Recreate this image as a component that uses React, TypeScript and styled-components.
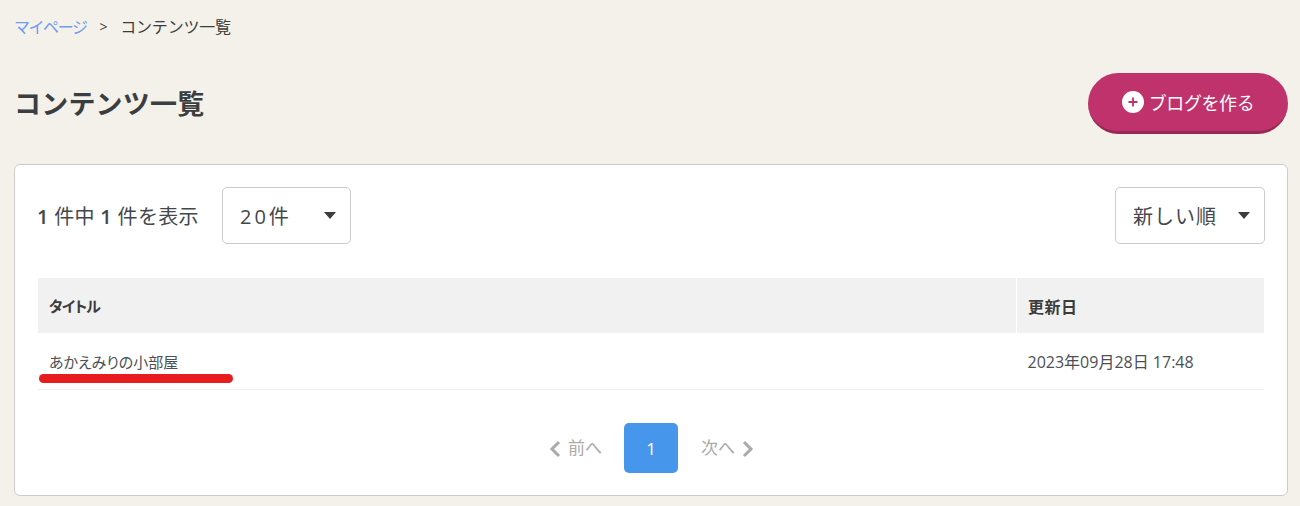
import * as React from "react";
import styled, { createGlobalStyle } from "styled-components";

const GlobalStyle = createGlobalStyle`
  html, body {
    margin: 0;
    padding: 0;
    background: #f4f1eb;
    color: #3c3c3c;
    font-family: "Open Sans", "Noto Sans CJK JP", sans-serif;
  }
`;

const Page = styled.div`
  width: 1300px;
  height: 506px;
  box-sizing: border-box;
  padding: 15px 12px 0 14px;
  overflow: hidden;
`;

const Breadcrumb = styled.nav`
  display: flex;
  align-items: center;
  height: 24px;
  font-size: 16px;
  line-height: 24px;
  letter-spacing: -0.2px;
`;

const CrumbLink = styled.a`
  color: #6c9bf0;
  letter-spacing: -1.45px;
`;

const CrumbSeparator = styled.span`
  margin: 0 13px;
  font-size: 14px;
  color: #444;
`;

const Header = styled.header`
  display: flex;
  justify-content: space-between;
  align-items: flex-start;
  margin-top: 34px;
  height: 91px;
`;

const Title = styled.h1`
  margin: 0;
  padding-top: 11px;
  font-size: 27px;
  line-height: 40px;
  font-weight: 700;
  letter-spacing: 0.2px;
  color: #3a3e40;
`;

const CreateButton = styled.button`
  display: flex;
  align-items: center;
  justify-content: center;
  gap: 5px;
  width: 200px;
  height: 61px;
  padding: 0;
  border: 0;
  border-bottom: 3px solid #9a2855;
  border-radius: 31px;
  background: #c0326b;
  color: #fff;
  font-family: inherit;
  font-size: 18px;
  letter-spacing: -0.4px;
`;

const PlusIcon = styled.svg`
  width: 22px;
  height: 22px;
  flex: none;
`;

const Card = styled.section`
  box-sizing: border-box;
  width: 1274px;
  height: 332px;
  padding: 22px 22px 0 23px;
  background: #fff;
  border: 1px solid #ccc;
  border-radius: 6px;
`;

const Toolbar = styled.div`
  display: flex;
  align-items: center;
  height: 57px;
`;

const Count = styled.div`
  width: 162px;
  margin-left: -1px;
  margin-right: 23px;
  font-size: 20px;
  letter-spacing: 0.3px;
  white-space: pre;
  color: #44484c;
`;

const Strong = styled.b`
  font-weight: 600;
`;

const Select = styled.div<{ $width: number; $push?: boolean; $spacing: number }>`
  box-sizing: border-box;
  display: flex;
  align-items: center;
  justify-content: space-between;
  width: ${(p) => p.$width}px;
  height: 57px;
  padding: 0 14px 0 17px;
  margin-left: ${(p) => (p.$push ? "auto" : "0")};
  border: 1px solid #ccc;
  border-radius: 5px;
  font-size: 20px;
  letter-spacing: ${(p) => p.$spacing}px;
  color: #44484c;
`;

const Caret = styled.span`
  width: 0;
  height: 0;
  border-left: 6px solid transparent;
  border-right: 6px solid transparent;
  border-top: 7px solid #3c3c3c;
`;

const Table = styled.table`
  width: 1226px;
  margin-top: 34px;
  border-collapse: collapse;
  table-layout: fixed;
`;

const HeadCell = styled.th<{ $width?: number }>`
  height: 55px;
  width: ${(p) => (p.$width ? `${p.$width}px` : "auto")};
  padding: 0 11px;
  background: #f1f1f1;
  text-align: left;
  font-size: 16px;
  font-weight: 700;
  font-feature-settings: "palt";
  letter-spacing: 0.5px;
  color: #3c3c3c;
  & + & {
    border-left: 1px solid #fff;
  }
`;

const TitleHead = styled(HeadCell)`
  font-size: 15px;
  letter-spacing: -0.8px;
`;

const Cell = styled.td`
  position: relative;
  height: 56px;
  padding: 0 11px;
  border-bottom: 1px solid #f1f1f1;
  font-size: 16px;
  font-feature-settings: "palt";
  color: #4c5054;
`;

const TitleCell = styled(Cell)`
  font-size: 15px;
`;

const Marker = styled.span`
  position: absolute;
  left: 1px;
  top: 41px;
  width: 194px;
  height: 9px;
  border-radius: 5px;
  background: #e81c1e;
`;

const Pager = styled.nav`
  display: flex;
  justify-content: center;
  align-items: center;
  margin-top: 33px;
  color: #aaa;
  font-size: 17px;
`;

const PagerLink = styled.span`
  display: flex;
  align-items: center;
  gap: 7px;
  line-height: 20px;
  padding-bottom: 1px;
`;

const CurrentPage = styled.span`
  display: flex;
  align-items: center;
  justify-content: center;
  width: 54px;
  height: 50px;
  margin: 0 23px 0 22px;
  border-radius: 5px;
  background: #4696ec;
  color: #fff;
  font-size: 17px;
`;

const Chevron = styled.svg`
  width: 12px;
  height: 18px;
  flex: none;
  margin-top: 3px;
`;

export default function App() {
  return (
    <>
      <GlobalStyle />
      <Page>
        <Breadcrumb>
          <CrumbLink>マイページ</CrumbLink>
          <CrumbSeparator>&gt;</CrumbSeparator>
          <span>コンテンツ一覧</span>
        </Breadcrumb>
        <Header>
          <Title>コンテンツ一覧</Title>
          <CreateButton>
            <PlusIcon viewBox="0 0 22 22">
              <circle cx="11" cy="11" r="11" fill="#fff" />
              <path d="M11 6.5v9M6.5 11h9" stroke="#c0326b" strokeWidth="1.8" />
            </PlusIcon>
            ブログを作る
          </CreateButton>
        </Header>
        <Card>
          <Toolbar>
            <Count>
              <Strong>1</Strong> 件中 <Strong>1</Strong> 件を表示
            </Count>
            <Select $width={129} $spacing={3}>
              20件
              <Caret />
            </Select>
            <Select $width={150} $push $spacing={1}>
              新しい順
              <Caret />
            </Select>
          </Toolbar>
          <Table>
            <thead>
              <tr>
                <TitleHead $width={956}>タイトル</TitleHead>
                <HeadCell>更新日</HeadCell>
              </tr>
            </thead>
            <tbody>
              <tr>
                <TitleCell>
                  あかえみりの小部屋
                  <Marker />
                </TitleCell>
                <Cell>2023年09月28日 17:48</Cell>
              </tr>
            </tbody>
          </Table>
          <Pager>
            <PagerLink>
              <Chevron viewBox="0 0 12 18">
                <path d="M10 2L3 9l7 7" fill="none" stroke="#aaa" strokeWidth="3" />
              </Chevron>
              前へ
            </PagerLink>
            <CurrentPage>1</CurrentPage>
            <PagerLink>
              次へ
              <Chevron viewBox="0 0 12 18">
                <path d="M2 2l7 7-7 7" fill="none" stroke="#aaa" strokeWidth="3" />
              </Chevron>
            </PagerLink>
          </Pager>
        </Card>
      </Page>
    </>
  );
}
